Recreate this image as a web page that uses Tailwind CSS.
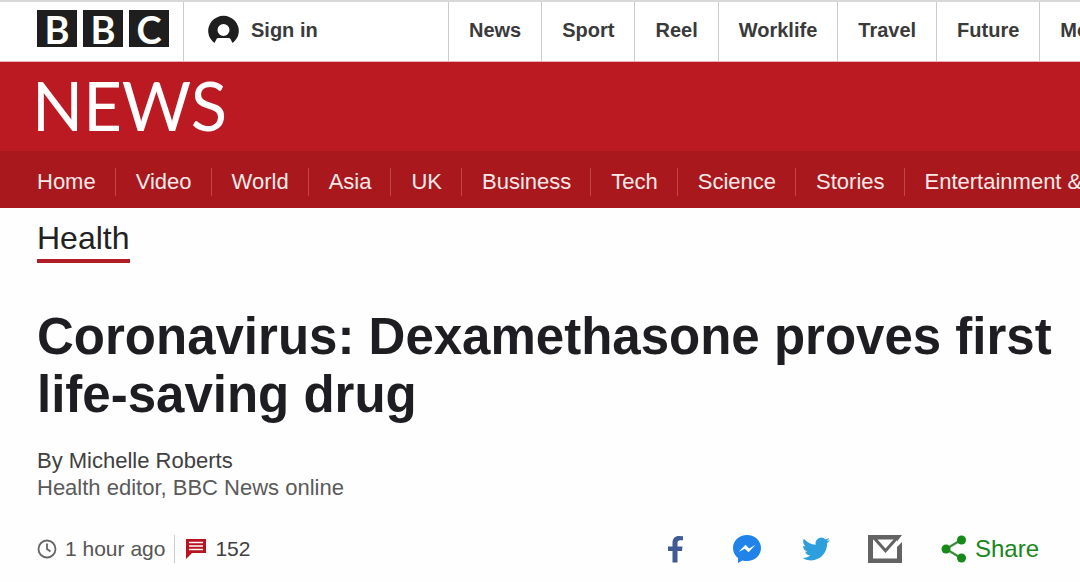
<!DOCTYPE html>
<html lang="en">
<head>
    <meta charset="UTF-8">
    <meta name="viewport" content="width=device-width, initial-scale=1.0">
    <title>Coronavirus: Dexamethasone proves first life-saving drug - BBC News</title>
    <script src="https://cdn.jsdelivr.net/npm/@tailwindcss/browser@4"></script>
</head>
<body class="bg-[#fefefe] font-['Liberation_Sans',Arial,sans-serif] text-[#404040] overflow-x-hidden">

    <!-- Global bar -->
    <header class="flex h-[62px] overflow-hidden whitespace-nowrap border-t-2 border-b border-t-[#d8d8d8] border-b-[#e8b4b6] bg-white text-xl font-bold text-[#3a3a3a]">
        <a href="#" aria-label="BBC" class="flex shrink-0 gap-[6px] pt-2 pl-[37px] pr-[14px] font-['Lato',sans-serif] text-[38px] leading-9 text-white">
            <span class="flex h-[37px] w-10 items-center justify-center bg-[#1e1e1e]">B</span>
            <span class="flex h-[37px] w-10 items-center justify-center bg-[#1e1e1e]">B</span>
            <span class="flex h-[37px] w-10 items-center justify-center bg-[#1e1e1e]">C</span>
        </a>
        <a href="#" class="flex w-[265px] shrink-0 items-center gap-3 border-l border-[#ccc] pb-1 pl-6">
            <svg class="h-[30px] w-[31px]" viewBox="0 0 31 30" fill="#1e1e1e">
                <path fill-rule="evenodd" d="M6.500 28A15.300 15 0 1 1 24.500 28L22.500 24Q22 23 20.500 23H10.500Q9 23 8.500 24ZM15.500 9A6 6 0 1 0 15.500 21A6 6 0 1 0 15.500 9Z"/>
            </svg>
            Sign in
        </a>
        <nav class="flex shrink-0">
            <a href="#" class="flex items-center border-l border-[#ccc] px-5 pb-1">News</a>
            <a href="#" class="flex items-center border-l border-[#ccc] px-5 pb-1">Sport</a>
            <a href="#" class="flex items-center border-l border-[#ccc] px-5 pb-1">Reel</a>
            <a href="#" class="flex items-center border-l border-[#ccc] px-5 pb-1">Worklife</a>
            <a href="#" class="flex items-center border-l border-[#ccc] px-5 pb-1">Travel</a>
            <a href="#" class="flex items-center border-l border-[#ccc] px-5 pb-1">Future</a>
            <a href="#" class="flex items-center border-l border-[#ccc] px-5 pb-1">More</a>
        </nav>
    </header>

    <!-- News masthead -->
    <div class="flex h-[89px] items-center bg-[#bb1a23] pl-8 pb-0.5">
        <a href="#" class="font-['Lato',sans-serif] text-[67px] leading-none text-white">NEWS</a>
    </div>
    <nav class="flex h-[57px] items-center overflow-hidden whitespace-nowrap bg-[#a8181c] pl-[37px] pt-1 text-[22px] leading-7 text-[#fbe9e9]">
        <a href="#" class="pr-[19px]">Home</a>
        <a href="#" class="border-l border-[#c4444a] pl-5 pr-[19px]">Video</a>
        <a href="#" class="border-l border-[#c4444a] pl-5 pr-[19px]">World</a>
        <a href="#" class="border-l border-[#c4444a] pl-5 pr-[19px]">Asia</a>
        <a href="#" class="border-l border-[#c4444a] pl-5 pr-[19px]">UK</a>
        <a href="#" class="border-l border-[#c4444a] pl-5 pr-[19px]">Business</a>
        <a href="#" class="border-l border-[#c4444a] pl-5 pr-[19px]">Tech</a>
        <a href="#" class="border-l border-[#c4444a] pl-5 pr-[19px]">Science</a>
        <a href="#" class="border-l border-[#c4444a] pl-5 pr-[19px]">Stories</a>
        <a href="#" class="border-l border-[#c4444a] pl-5 pr-[19px]">Entertainment &amp; Arts</a>
    </nav>

    <!-- Story -->
    <main class="pl-[37px] pr-6">
        <div class="flex pt-3">
            <a href="#" class="border-b-4 border-[#b01c28] pb-[3px] text-[32px] leading-9 text-[#222]">Health</a>
        </div>
        <h1 class="pt-[45px] text-[51px] leading-[58px] font-bold text-[#1e1e22]">Coronavirus: Dexamethasone proves first life-saving drug</h1>

        <div class="pt-[23px] text-[22px] leading-[27px]">
            <p class="text-[#404040]">By Michelle Roberts</p>
            <p class="text-[#5a5a5a]">Health editor, BBC News online</p>
        </div>

        <div class="flex items-center justify-between pt-8 text-[21px] leading-8">
            <div class="flex items-center">
                <svg class="mr-2 h-5 w-5" viewBox="0 0 20 20" fill="none" stroke="#666" stroke-width="1.800">
                    <circle cx="10" cy="10" r="8.500"/>
                    <path d="M10 4.500V10L13.500 12.500"/>
                </svg>
                <span class="text-[#555]">1 hour ago</span>
                <a href="#" class="ml-[9px] flex h-7 items-center gap-[9px] border-l border-[#ccc] pl-[11px]">
                    <svg class="h-5 w-5" viewBox="0 0 20 20">
                        <path fill="#b8131f" d="M0 0H20V14H6L0 20Z"/>
                        <path stroke="#fff" stroke-width="1.500" d="M3 3.500H17M3 7H17M3 10.500H17"/>
                    </svg>
                    152
                </a>
            </div>

            <div class="flex items-center">
                <a href="#" aria-label="Facebook">
                    <svg class="h-7 w-4" viewBox="0 0 16 28" fill="#3f5a94">
                        <path d="M4.500 27.500V16H0V11.500H4.500V8C4.500 3.500 7 1 11 1Q13.500 1 15 1.300V5.300H12.500C10 5.300 9.500 6.500 9.500 8.200V11.500H14.500L14 16H9.500V27.500Z"/>
                    </svg>
                </a>
                <a href="#" aria-label="Messenger" class="ml-12">
                    <svg class="h-[30px] w-[30px]" viewBox="0 0 30 30">
                        <path fill="#1f83ea" d="M15 1C7 1 1 6.800 1 14C1 18 2.800 21.500 6 24V29L10.500 26.500Q12.500 27 15 27C23 27 29 21.300 29 14C29 6.800 23 1 15 1Z"/>
                        <path fill="#fff" d="M6.500 18L13.500 10.800L17.200 14.500L23.500 10.800L16.500 18.300L12.800 14.700Z"/>
                    </svg>
                </a>
                <a href="#" aria-label="Twitter" class="ml-10">
                    <svg class="h-7 w-7" viewBox="0 0 24 24" fill="#2d9fdc">
                        <path d="M23.950 4.570a10 10 0 0 1-2.820.770 4.960 4.960 0 0 0 2.160-2.720c-.950.550-2 .950-3.130 1.180a4.920 4.920 0 0 0-8.380 4.480C7.690 8.090 4.070 6.130 1.640 3.160a4.820 4.820 0 0 0-.670 2.480c0 1.710.870 3.210 2.190 4.100a4.900 4.900 0 0 1-2.230-.620v.060a4.920 4.920 0 0 0 3.950 4.830 5 5 0 0 1-2.210.080 4.940 4.940 0 0 0 4.600 3.420A9.870 9.870 0 0 1 0 19.540a14 14 0 0 0 7.550 2.210c9.050 0 14-7.500 14-13.980 0-.210 0-.420-.020-.630a9.940 9.940 0 0 0 2.460-2.550z"/>
                    </svg>
                </a>
                <a href="#" aria-label="Email" class="ml-[38px]">
                    <svg class="h-[30px] w-[34px]" viewBox="0 0 34 30">
                        <path fill="#636363" d="M0 1H34V29H0Z"/>
                        <path fill="#fefefe" d="M5 5.500H29V24.500H5Z"/>
                        <path fill="#636363" d="M5 5H30L17.500 19Z"/>
                        <path fill="#fefefe" d="M9.500 5.500H25.500L17.500 14.500Z"/>
                        <path fill="#fefefe" d="M34 1V8L29 13V7.500Z"/>
                    </svg>
                </a>
                <button type="button" class="ml-[39px] flex items-center gap-2 pr-[17px] text-2xl text-[#1a861d]">
                    <svg class="h-7 w-[26px]" viewBox="0 0 26 28" fill="#158a19">
                        <path fill="none" stroke="#3c8a3e" stroke-width="2.200" d="M20 5L5 14L20 23"/>
                        <circle cx="5" cy="14" r="4.500"/>
                        <circle cx="20.500" cy="5" r="4.500"/>
                        <circle cx="20.500" cy="23" r="4.500"/>
                    </svg>
                    Share
                </button>
            </div>
        </div>
    </main>

</body>
</html>
